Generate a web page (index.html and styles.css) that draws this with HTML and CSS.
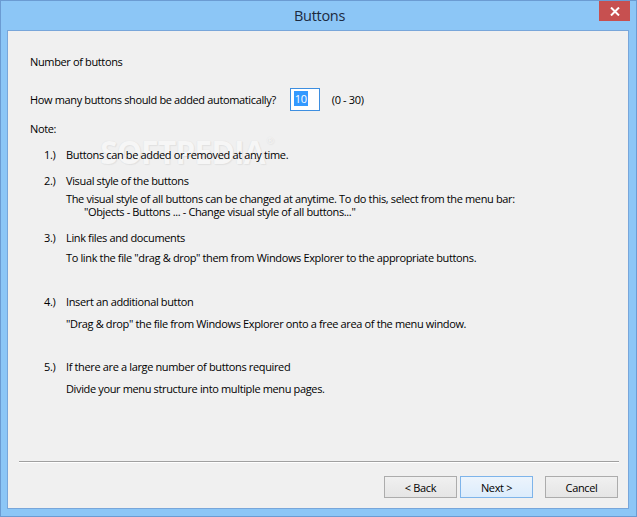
FILE: index.html
```html
<!DOCTYPE html>
<html lang="en">
  <head>
    <meta charset="UTF-8" />
    <meta name="viewport" content="width=device-width, initial-scale=1.0" />
    <title>Buttons</title>
    <link rel="stylesheet" href="styles.css">
  </head>
  <body>
    <div class="window">
      <div class="titlebar">
        <span class="title">Buttons</span>
        <button class="close" aria-label="Close">
          <svg width="10" height="9" viewBox="0 0 10 9">
            <path d="M1 0.5 L9 8.5 M9 0.5 L1 8.5" stroke="#fff" stroke-width="2" fill="none" />
          </svg>
        </button>
      </div>
      <div class="client">
        <div class="content">
          <div class="watermark">SOFTPEDIA<sup>&reg;</sup></div>
          <p class="section">Number of buttons</p>
          <div class="count-row">
            <span>How many buttons should be added automatically?</span>
            <span class="count-box"><span class="selected">10</span></span>
            <span>(0 - 30)</span>
          </div>
          <p class="note">Note:</p>

          <div class="item item-1">
            <span class="num">1.)</span>
            <span class="item-title">Buttons can be added or removed at any time.</span>
          </div>

          <div class="item item-2">
            <span class="num">2.)</span>
            <span class="item-title">Visual style of the buttons</span>
            <p class="item-text dense">
              The visual style of all buttons can be changed at anytime. To do this, select from the menu bar:<br>
              <span class="quote">"Objects - Buttons ... - Change visual style of all buttons..."</span>
            </p>
          </div>

          <div class="item item-3">
            <span class="num">3.)</span>
            <span class="item-title">Link files and documents</span>
            <p class="item-text">To link the file "drag &amp; drop" them from Windows Explorer to the appropriate buttons.</p>
          </div>

          <div class="item item-4">
            <span class="num">4.)</span>
            <span class="item-title">Insert an additional button</span>
            <p class="item-text wide">"Drag &amp; drop" the file from Windows Explorer onto a free area of the menu window.</p>
          </div>

          <div class="item item-5">
            <span class="num">5.)</span>
            <span class="item-title">If there are a large number of buttons required</span>
            <p class="item-text wide">Divide your menu structure into multiple menu pages.</p>
          </div>
        </div>

        <div class="separator"></div>

        <div class="actions">
          <button class="btn">&lt; Back</button>
          <button class="btn btn-default">Next &gt;</button>
          <button class="btn btn-cancel">Cancel</button>
        </div>
      </div>
    </div>
  </body>
</html>
```

FILE: styles.css
```css
body {
  margin: 0;
  font-family: "Open Sans", "Noto Sans", sans-serif;
  font-size: 11px;
  letter-spacing: -0.36px;
  color: #000;
}
p {
  margin: 0;
}
.window {
  box-sizing: border-box;
  width: 637px;
  height: 517px;
  border: 1px solid #6b9bd2;
  background-color: #8cc6f6;
  display: flex;
  flex-direction: column;
  padding: 0 7px 7px 6px;
}
.titlebar {
  height: 29px;
  display: grid;
  grid-template-columns: 1fr auto 1fr;
  margin-right: -7px;
}
.title {
  grid-column: 2;
  font-size: 14.5px;
  letter-spacing: -0.3px;
  line-height: 29px;
  color: #1c2a3f;
  padding-right: 4px;
}
.close {
  grid-column: 3;
  justify-self: end;
  align-self: start;
  width: 31px;
  height: 20px;
  margin-right: 6px;
  border: none;
  padding: 0;
  background-color: #c75050;
  display: flex;
  align-items: center;
  justify-content: center;
}
.client {
  flex: 1;
  background-color: #f0f0f0;
  border: 1px solid #78a6da;
  display: flex;
  flex-direction: column;
}
.content {
  flex: 1;
  position: relative;
  padding: 23px 0 0 22px;
  line-height: 16px;
}
.watermark {
  position: absolute;
  left: 92px;
  top: 105px;
  font-size: 32px;
  line-height: 1;
  font-weight: bold;
  letter-spacing: -1px;
  color: #f6f6f6;
  text-shadow: 0 0 1px #dadada, 1px 1px 1px #e2e2e2;
}
.watermark sup {
  font-size: 9px;
  font-weight: normal;
  vertical-align: top;
  margin-left: 2px;
}
.count-row {
  position: relative;
  display: flex;
  align-items: center;
  margin-top: 18px;
  height: 23px;
}
.count-box {
  box-sizing: border-box;
  width: 30px;
  height: 23px;
  margin: 0 12px 0 14px;
  background-color: #fff;
  border: 1px solid #3d8ee0;
  padding: 2px 0 0 3px;
}
.selected {
  display: inline-block;
  background-color: #3399ff;
  color: #fff;
  line-height: 15px;
  padding: 0 1px;
}
.note {
  margin-top: 10px;
}
.item {
  position: relative;
  display: grid;
  grid-template-columns: 22px 1fr;
  margin-left: 14px;
}
.num {
  grid-column: 1;
}
.item-title {
  grid-column: 2;
}
.item-text {
  grid-column: 2;
  margin-top: 4px;
}
.item-text.dense {
  line-height: 13px;
  margin-top: 3px;
}
.item-text.wide {
  margin-top: 6px;
}
.quote {
  padding-left: 18px;
}
.item-1 {
  margin-top: 10px;
}
.item-2 {
  margin-top: 10px;
}
.item-3 {
  margin-top: 12px;
}
.item-4 {
  margin-top: 28px;
}
.item-5 {
  margin-top: 27px;
}
.separator {
  margin: 0 9px 0 11px;
  border-top: 1px solid #a0a0a0;
  border-bottom: 1px solid #fff;
}
.actions {
  display: flex;
  justify-content: flex-end;
  padding: 13px 10px 10px 0;
}
.btn {
  box-sizing: border-box;
  width: 73px;
  height: 22px;
  margin-left: 3px;
  border: 1px solid #acacac;
  background: linear-gradient(#f0f0f0, #e5e5e5);
  font-family: inherit;
  font-size: 11px;
  letter-spacing: inherit;
  color: #000;
  padding: 0;
}
.btn-default {
  border-color: #7eb4ea;
  background: linear-gradient(#ecf4fc, #dcecfc);
}
.btn-cancel {
  margin-left: 12px;
}
```
